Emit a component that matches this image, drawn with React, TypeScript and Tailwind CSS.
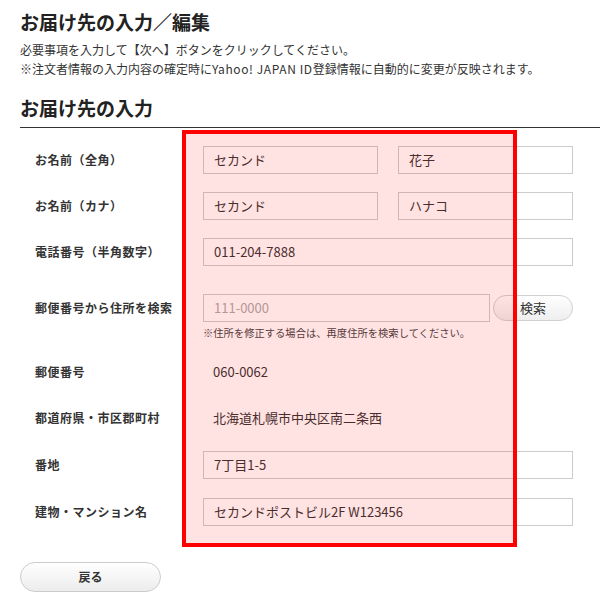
const FONT = "font-['Noto_Sans_CJK_JP','Noto_Sans',sans-serif]"

function Field({ value, placeholder, className = '' }: { value?: string; placeholder?: string; className?: string }) {
  return (
    <div className={`h-[28px] border border-[#cccccc] bg-white flex items-center px-[10px] text-[13px] ${className}`}>
      {value ? <span className="text-[#333]">{value}</span> : <span className="text-[#aaaaaa]">{placeholder}</span>}
    </div>
  )
}

function Row({ label, children, h = 'h-[46px]' }: { label: string; children: React.ReactNode; h?: string }) {
  return (
    <div className={`flex items-center ${h}`}>
      <div className="w-[183px] pl-[15px] text-[12px] font-bold text-[#333] tracking-[0.5px]">{label}</div>
      <div className="flex-1 flex items-center">{children}</div>
    </div>
  )
}

export default function App() {
  return (
    <div className={`relative w-[600px] h-[606px] bg-white overflow-hidden ${FONT} text-[#333]`}>
      <div className="pl-[20px]">
        <h1 className="pt-[10px] text-[19px] leading-[24px] font-bold text-[#222]">お届け先の入力／編集</h1>
        <p className="mt-[6px] text-[12px] leading-[19px]">
          必要事項を入力して【次へ】ボタンをクリックしてください。<br />
          ※注文者情報の入力内容の確定時に<span className="tracking-[0.6px]">Yahoo! JAPAN ID</span>登録情報に自動的に変更が反映されます。
        </p>
        <h2 className="mt-[18px] pb-[7px] text-[19px] leading-[24px] font-bold text-[#222] border-b border-[#333]">お届け先の入力</h2>
      </div>

      <div className="pl-[20px] pt-[9px] w-[593px]">
        <Row label="お名前（全角）">
          <Field value="セカンド" className="w-[175px]" />
          <Field value="花子" className="w-[175px] ml-[20px]" />
        </Row>
        <Row label="お名前（カナ）">
          <Field value="セカンド" className="w-[175px]" />
          <Field value="ハナコ" className="w-[175px] ml-[20px]" />
        </Row>
        <Row label="電話番号（半角数字）">
          <Field value="011-204-7888" className="w-[370px]" />
        </Row>
        <div className="flex items-start pt-[19px] h-[74px]">
          <div className="w-[183px] pl-[15px] text-[12px] leading-[28px] font-bold tracking-[0.5px]">郵便番号から住所を検索</div>
          <div className="flex-1">
            <div className="flex items-center">
              <Field placeholder="111-0000" className="w-[287px]" />
              <button className="ml-[3px] w-[80px] h-[26px] rounded-full border border-[#d0d0d0] bg-gradient-to-b from-white to-[#eeeeee] text-[13px] text-[#333]">検索</button>
            </div>
            <div className="mt-[4px] text-[10.3px] leading-[14px] text-[#444]">※住所を修正する場合は、再度住所を検索してください。</div>
          </div>
        </div>
        <Row label="郵便番号">
          <span className="pl-[10px] text-[13px]">060-0062</span>
        </Row>
        <Row label="都道府県・市区郡町村">
          <span className="pl-[10px] text-[13px]">北海道札幌市中央区南二条西</span>
        </Row>
        <Row label="番地" h="h-[48px]">
          <Field value="7丁目1-5" className="w-[370px]" />
        </Row>
        <Row label="建物・マンション名">
          <Field value="セカンドポストビル2F W123456" className="w-[370px]" />
        </Row>
      </div>

      <div className="pl-[20px] mt-[27px]">
        <button className="w-[141px] h-[30px] rounded-full border border-[#cccccc] bg-gradient-to-b from-white to-[#ececec] text-[12px] font-bold text-[#333]">戻る</button>
      </div>

      {/* highlight overlay */}
      <div className="absolute left-[182px] top-[130px] w-[335px] h-[417px] border-4 border-[#ff0000] bg-[rgba(255,0,0,0.11)] pointer-events-none" />
    </div>
  )
}
